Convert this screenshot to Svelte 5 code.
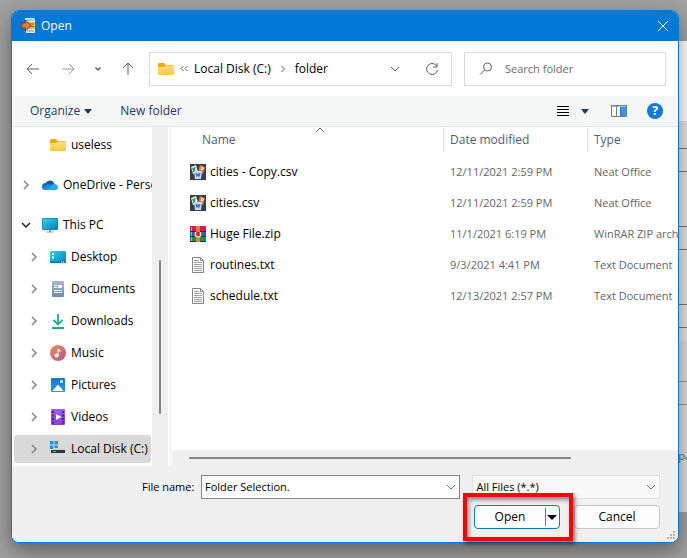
<script lang="ts">
	interface TreeItem {
		label: string;
		icon: string;
		level: number;
		chevron?: 'open' | 'closed';
		gap?: boolean;
	}

	interface FileItem {
		name: string;
		icon: string;
		modified: string;
		type: string;
	}

	const tree: TreeItem[] = [
		{ label: 'useless', icon: 'folder', level: 1 },
		{ label: 'OneDrive - Personal', icon: 'onedrive', level: 0, chevron: 'closed', gap: true },
		{ label: 'This PC', icon: 'pc', level: 0, chevron: 'open', gap: true },
		{ label: 'Desktop', icon: 'desktop', level: 1, chevron: 'closed' },
		{ label: 'Documents', icon: 'documents', level: 1, chevron: 'closed' },
		{ label: 'Downloads', icon: 'downloads', level: 1, chevron: 'closed' },
		{ label: 'Music', icon: 'music', level: 1, chevron: 'closed' },
		{ label: 'Pictures', icon: 'pictures', level: 1, chevron: 'closed' },
		{ label: 'Videos', icon: 'videos', level: 1, chevron: 'closed' },
		{ label: 'Local Disk (C:)', icon: 'disk', level: 1, chevron: 'closed' }
	];

	const files: FileItem[] = [
		{ name: 'cities - Copy.csv', icon: 'csv', modified: '12/11/2021 2:59 PM', type: 'Neat Office' },
		{ name: 'cities.csv', icon: 'csv', modified: '12/11/2021 2:59 PM', type: 'Neat Office' },
		{ name: 'Huge File.zip', icon: 'zip', modified: '11/1/2021 6:19 PM', type: 'WinRAR ZIP archive' },
		{ name: 'routines.txt', icon: 'txt', modified: '9/3/2021 4:41 PM', type: 'Text Document' },
		{ name: 'schedule.txt', icon: 'txt', modified: '12/13/2021 2:57 PM', type: 'Text Document' }
	];

	let selected = $state('Local Disk (C:)');
	let search = $state('');
	let fileName = $state('Folder Selection.');
</script>

{#snippet icon(name: string)}
	<svg class="icon" width="16" height="16" viewBox="0 0 16 16" aria-hidden="true">
		{#if name === 'folder'}
			<path d="M0 3Q0 2 1 2h5l2 2h7q1 0 1 1v3H0z" fill="#f2aa12" />
			<path d="M0 6h6l2-1.500h7q1 0 1 1V13q0 1-1 1H1q-1 0-1-1z" fill="url(#folder-fill)" />
		{:else if name === 'onedrive'}
			<path d="M3 7a5 5 0 0 1 9-1l2 4H3z" fill="#0c59a4" />
			<circle cx="3.500" cy="9.500" r="3.500" fill="#1070bc" />
			<path d="M6 7q3 0 5 3l-6 3H3Q1 13 .5 11z" fill="#168bd7" />
			<path d="M9 8.500q1-1.500 3-1.500 4 0 4 3.500 0 2.500-3 2.500H3l5-3z" fill="#28a8ea" />
		{:else if name === 'pc'}
			<path d="M7 12h2v3H7zM4.500 14.500h7v1h-7z" fill="#8d969c" />
			<rect y="1" width="16" height="12" rx="1" fill="#167da7" />
			<rect x=".7" y="1.700" width="14.600" height="10.600" fill="url(#screen-fill)" />
		{:else if name === 'desktop'}
			<rect y="2" width="16" height="12" rx="1" fill="url(#screen-fill)" />
			<path d="M0 12.500h16V13q0 1-1 1H1q-1 0-1-1z" fill="#1675a8" />
			<path d="M2 4h2v2H2zM2 7.500h2v2H2zM11 12.500h1v1h-1zM13 12.500h1v1h-1z" fill="#fff" />
		{:else if name === 'documents'}
			<rect x="2" y="0" width="12" height="16" rx="1" fill="url(#document-fill)" />
			<path d="M4 4.500h3M4 6.500h3M4 9.500h8M4 11.500h8" stroke="#fff" />
			<path d="M8 4h4v3H8z" fill="#fff" />
		{:else if name === 'downloads'}
			<path d="M8 1v10M3.500 7 8 11.500 12.500 7M2 15h12" fill="none" stroke="#18ae8d" stroke-width="1.800" />
		{:else if name === 'music'}
			<circle cx="8" cy="8" r="8" fill="url(#music-fill)" />
			<circle cx="6.500" cy="10.500" r="2" fill="#fff" />
			<path d="M7.500 11V3.500l3 1.500v2l-2-1V11" fill="#fff" />
		{:else if name === 'pictures'}
			<rect x="1" y="1" width="14" height="14" rx="1" fill="url(#picture-fill)" />
			<path d="M2.500 14 7.500 8q.5-.5 1 0l5 6z" fill="#fff" />
			<circle cx="11.500" cy="4.500" r="1.500" fill="#e9f6ff" />
		{:else if name === 'videos'}
			<rect x="1" y="0" width="14" height="16" rx="1" fill="url(#video-fill)" />
			<path
				d="M2 2h2v2H2zM2 5.500h2v2H2zM2 9h2v2H2zM2 12.500h2v2H2zM12 2h2v2h-2zM12 5.500h2v2h-2zM12 9h2v2h-2zM12 12.500h2v2h-2z"
				fill="#55248e"
			/>
			<path d="M6 5l5.500 3L6 11z" fill="#fff" />
		{:else if name === 'disk'}
			<path d="M0 0h3.500v3.500H0zM4.500 0H8v3.500H4.500zM0 4.500h3.500V8H0zM4.500 4.500H8V8H4.500z" fill="#1597e5" />
			<path d="M4 7h9l2 2H2z" fill="#cfd2d4" />
			<path d="M1 9h14v3H1z" fill="#30363a" />
			<path d="M3 10.500h3" stroke="#42e260" />
		{:else if name === 'csv'}
			<rect width="16" height="16" fill="#343f48" />
			<path d="M1 3l5-2 2 7-5 2z" fill="#e4f7eb" />
			<path d="M2.500 4l3 4M5 3 3.500 8" stroke="#19985a" stroke-width="1.300" />
			<path d="M10 1l5 2-2 7-5-2z" fill="#f27248" />
			<path d="M11 6l1-3 1.500 1-.5 1.500-2-.5" fill="none" stroke="#fff" />
			<path d="M4 7h8l-1 8H5z" fill="#c5daf7" />
			<path d="M6 9l1 3 1-2 1 2 1-3" fill="none" stroke="#316ec1" stroke-width="1.200" />
		{:else if name === 'zip'}
			<rect width="16" height="6" fill="#c72358" />
			<rect y="5" width="16" height="6" fill="#3c56b5" />
			<rect y="10" width="16" height="6" fill="#159253" />
			<path d="M0 5.500h16M0 10.500h16M0 15.500h16" stroke="#173347" />
			<path d="M1.500 1v4M1.500 6v4M1.500 11v4" stroke="#e8a13d" />
			<rect x="6" width="4" height="16" fill="#ed7c24" />
			<path d="M5.500 6v4q2.500 1.500 5 0V6" fill="#ac3620" stroke="#ffe8b5" stroke-width="1.400" />
		{:else}
			<path d="M2.500.5h8l3 3v12h-11z" fill="#fff" stroke="#858585" />
			<path d="M10.500.5v3h3" fill="none" stroke="#858585" />
			<path d="M4 3.500h5M4 5.500h8M4 7.500h8M4 9.500h8M4 11.500h8M4 13.500h8" stroke="#a0a0a0" />
		{/if}
	</svg>
{/snippet}

{#snippet chevron(dir: 'down' | 'right')}
	<svg class="chevron" width="10" height="10" viewBox="0 0 10 10" aria-hidden="true">
		<path d={dir === 'down' ? 'M1 3l4 4 4-4' : 'M3 1l4 4-4 4'} />
	</svg>
{/snippet}

<svg class="defs" width="0" height="0" aria-hidden="true">
	<defs>
		<linearGradient id="folder-fill" x2="0" y2="1">
			<stop stop-color="#ffdf80" /><stop offset="1" stop-color="#ffc83d" />
		</linearGradient>
		<linearGradient id="screen-fill" x2="1" y2="1">
			<stop stop-color="#32d5ed" /><stop offset="1" stop-color="#087bbd" />
		</linearGradient>
		<linearGradient id="document-fill" x2="0" y2="1">
			<stop stop-color="#a5b9cf" /><stop offset="1" stop-color="#6b88ac" />
		</linearGradient>
		<linearGradient id="music-fill" x2="1" y2="1">
			<stop stop-color="#ef9159" /><stop offset="1" stop-color="#b65487" />
		</linearGradient>
		<linearGradient id="picture-fill" x2="0" y2="1">
			<stop stop-color="#1479c9" /><stop offset="1" stop-color="#23a0ed" />
		</linearGradient>
		<linearGradient id="video-fill" x2="0" y2="1">
			<stop stop-color="#a45df0" /><stop offset="1" stop-color="#8642d5" />
		</linearGradient>
	</defs>
</svg>

<div class="desktop">
	<div class="behind" aria-hidden="true"><span>pa</span></div>

	<main class="dialog">
		<header class="titlebar">
			<svg width="16" height="16" viewBox="0 0 16 16" aria-hidden="true">
				<path d="M5 0h9l1 2v4H5zM5 10h10v5H6z" fill="#d8e9fa" />
				<path d="M7 2h6M7 13h7" stroke="#6b9dd0" />
				<path d="M7 4h8v7H7z" fill="#f2bb35" />
				<path d="M9 6h5M9 8.500h5" stroke="#9b6816" />
				<path d="M.5 5h5V2L11 7.500 5.500 13v-3h-5l2-2.500z" fill="#e97832" stroke="#803a25" />
			</svg>
			<h1>Open</h1>
			<button type="button" class="close" aria-label="Close">
				<svg width="12" height="12" viewBox="0 0 12 12"><path d="M1 1l10 10M11 1 1 11" /></svg>
			</button>
		</header>

		<nav class="navbar">
			<div class="history">
				<button type="button" aria-label="Back">
					<svg width="14" height="14" viewBox="0 0 14 14"><path d="M13 7H1M6 2 1 7l5 5" /></svg>
				</button>
				<button type="button" class="faded" aria-label="Forward">
					<svg width="14" height="14" viewBox="0 0 14 14"><path d="M1 7h12M8 2l5 5-5 5" /></svg>
				</button>
				<button type="button" class="recent" aria-label="Recent locations">
					<svg width="14" height="14" viewBox="0 0 14 14"><path d="M4.500 5.500 7 8l2.500-2.500" /></svg>
				</button>
				<button type="button" aria-label="Up">
					<svg width="14" height="14" viewBox="0 0 14 14"><path d="M7 13V1M2 6l5-5 5 5" /></svg>
				</button>
			</div>
			<div class="address">
				{@render icon('folder')}
				<svg class="overflow" width="8" height="8" viewBox="0 0 8 8" aria-hidden="true">
					<path d="M3.500 1 1 3.500 3.500 6M7.500 1 5 3.500 7.500 6" />
				</svg>
				<a href="#disk">Local Disk (C:)</a>
				<svg class="crumb" width="8" height="8" viewBox="0 0 8 8" aria-hidden="true">
					<path d="M2.500 1l3 3-3 3" />
				</svg>
				<a href="#folder">folder</a>
				<button type="button" class="previous" aria-label="Previous locations">{@render chevron('down')}</button>
				<button type="button" aria-label="Refresh">
					<svg width="14" height="14" viewBox="0 0 14 14">
						<path d="M12 4.500A5.500 5.500 0 1 0 12.500 8M12 1v4H8" />
					</svg>
				</button>
			</div>
			<label class="search">
				<svg width="14" height="14" viewBox="0 0 14 14" aria-hidden="true">
					<circle cx="8.500" cy="5" r="4" /><path d="M5.500 8 1 12.500" />
				</svg>
				<input type="text" placeholder="Search folder" aria-label="Search folder" bind:value={search} />
			</label>
		</nav>

		<div class="toolbar">
			<button type="button">
				Organize
				<svg width="8" height="5" viewBox="0 0 8 5" aria-hidden="true"><path d="M0 0h8L4 5z" /></svg>
			</button>
			<button type="button">New folder</button>
			<div class="views">
				<button type="button" aria-label="Change your view">
					<svg width="12" height="12" viewBox="0 0 12 12">
						<path d="M0 1.500h12M0 4.500h12M0 7.500h12M0 10.500h12" stroke="#000" />
					</svg>
				</button>
				<button type="button" aria-label="More options">
					<svg width="8" height="5" viewBox="0 0 8 5"><path d="M0 0h8L4 5z" /></svg>
				</button>
				<button type="button" class="preview" aria-label="Show the preview pane">
					<svg width="16" height="12" viewBox="0 0 16 12">
						<path d="M.5.5h15v11H.5z" fill="#fff" stroke="#737b84" />
						<path d="M0 1h16M5.500 1v11" stroke="#737b84" />
						<path d="M9 2h6v9H9z" fill="#3997e6" />
						<path d="M9.500 2v9" stroke="#1f7bd0" />
					</svg>
				</button>
				<button type="button" class="help" aria-label="Get help">?</button>
			</div>
		</div>

		<div class="content">
			<ul class="tree">
				{#each tree as item}
					<li
						class="tree__item"
						class:tree__item--nested={item.level === 1}
						class:tree__item--gap={item.gap}
						class:tree__item--selected={selected === item.label}
					>
						<button
							type="button"
							class="tree__toggle"
							class:tree__toggle--open={item.chevron === 'open'}
							class:tree__toggle--none={!item.chevron}
							aria-label="Expand {item.label}"
						>
							{@render chevron(item.chevron === 'open' ? 'down' : 'right')}
						</button>
						<button type="button" class="tree__label" onclick={() => (selected = item.label)}>
							{@render icon(item.icon)}
							{item.label}
						</button>
					</li>
				{/each}
			</ul>
			<div class="vscroll"><div class="vscroll__thumb"></div></div>
			<section class="files">
				<svg class="sort" width="8" height="5" viewBox="0 0 8 5" aria-hidden="true"><path d="M.5 4.500 4 1l3.500 3.500" /></svg>
				<table>
					<thead>
						<tr>
							<th class="name">Name</th>
							<th class="modified">Date modified</th>
							<th class="type">Type</th>
						</tr>
					</thead>
					<tbody>
						{#each files as file}
							<tr>
								<td><div class="file">{@render icon(file.icon)}{file.name}</div></td>
								<td>{file.modified}</td>
								<td>{file.type}</td>
							</tr>
						{/each}
					</tbody>
				</table>
				<div class="hscroll"><div class="hscroll__thumb"></div></div>
			</section>
		</div>

		<footer class="footer">
			<div class="fields">
				<label for="file-name">File name:</label>
				<div class="combo">
					<input id="file-name" type="text" bind:value={fileName} />
					<button type="button" aria-label="Recent names">{@render chevron('down')}</button>
				</div>
				<div class="filter">
					<select aria-label="File type">
						<option>All Files (*.*)</option>
					</select>
					{@render chevron('down')}
				</div>
			</div>
			<div class="actions">
				<div class="split">
					<button type="button" class="split__main">Open</button>
					<button type="button" class="split__more" aria-label="Open options">
						<svg width="10" height="5" viewBox="0 0 10 5"><path d="M0 0h10L5 5z" /></svg>
					</button>
					<span class="highlight" aria-hidden="true"></span>
				</div>
				<button type="button" class="cancel">Cancel</button>
			</div>
			<svg class="grip" width="8" height="8" viewBox="0 0 8 8" aria-hidden="true">
				<path d="M6 0h2v2H6zM3 3h2v2H3zM6 3h2v2H6zM0 6h2v2H0zM3 6h2v2H3zM6 6h2v2H6z" fill="#b4b4b4" />
			</svg>
		</footer>
	</main>
</div>

<style>
	:global(body) {
		margin: 0;
		background: #a0a0a0;
	}

	.desktop {
		position: relative;
		overflow: hidden;
		padding: 10px 8px 15px 11px;
		font-family: 'Open Sans', 'Noto Sans', sans-serif;
		font-size: 11px;
		line-height: 16px;
		color: #000;
	}

	.desktop *,
	.desktop *::before {
		box-sizing: border-box;
	}

	.defs {
		position: absolute;
	}

	button,
	input,
	select {
		margin: 0;
		padding: 0;
		border: none;
		background: none;
		font: inherit;
		color: inherit;
	}

	input,
	select {
		outline: none;
	}

	a {
		color: inherit;
		text-decoration: none;
	}

	svg {
		display: block;
		flex: none;
	}

	.chevron {
		fill: none;
		stroke: #707070;
	}

	/* page showing past the right edge of the dialog */
	.behind {
		position: absolute;
		top: 41px;
		right: 0;
		bottom: 46px;
		width: 60px;
		overflow: hidden;
		background:
			linear-gradient(#777, #777) 0 107px / 100% 1px no-repeat,
			linear-gradient(#777, #777) 0 130px / 100% 1px no-repeat,
			linear-gradient(#777, #777) 0 185px / 100% 1px no-repeat,
			linear-gradient(#777, #777) 0 208px / 100% 1px no-repeat,
			linear-gradient(#777, #777) 0 263px / 100% 1px no-repeat,
			linear-gradient(#777, #777) 0 286px / 100% 1px no-repeat,
			linear-gradient(#999, #999) 0 340px / 100% 1px no-repeat,
			linear-gradient(#999, #999) 0 363px / 100% 1px no-repeat,
			linear-gradient(#fff 0 80px, #e4e4e4 80px 300px, #dcdcdc 300px);
		color: #666;
	}

	.behind span {
		position: absolute;
		right: -4px;
		bottom: 48px;
	}

	.dialog {
		position: relative;
		border: 1px solid #0078d7;
		border-radius: 8px;
		background: #fff;
		box-shadow: 0 8px 20px rgba(0, 0, 0, 0.4);
	}

	.titlebar {
		display: flex;
		align-items: center;
		gap: 5px;
		height: 30px;
		padding: 0 9px 0 8px;
		border-radius: 7px 7px 0 0;
		background: #0078d7;
		color: #fff;
	}

	.titlebar h1 {
		flex: 1;
		margin: 0;
		font-size: 12px;
		font-weight: 400;
	}

	.close svg {
		fill: none;
		stroke: #fff;
	}

	.navbar {
		display: flex;
		align-items: center;
		gap: 12px;
		height: 55px;
		padding: 0 12px 0 14px;
	}

	.history {
		display: flex;
		gap: 21px;
		width: 111px;
	}

	.navbar svg:not(.icon) {
		fill: none;
		stroke: #606060;
	}

	.history .faded {
		opacity: 0.6;
	}

	.history .recent {
		margin: 0 -5px;
	}

	.history .recent svg {
		stroke-width: 1.5;
	}

	.address,
	.search {
		display: flex;
		align-items: center;
		height: 34px;
		border: 1px solid #d9d9d9;
		background: #fff;
	}

	.address {
		flex: 3 1 60px;
		gap: 6px;
		padding: 0 12px 0 8px;
		font-size: 12px;
		white-space: nowrap;
	}

	.address .crumb {
		margin: 0 2px;
	}

	.address .previous {
		margin: 0 19px 0 auto;
	}

	.search {
		flex: 2 1 40px;
		gap: 12px;
		padding: 0 14px;
	}

	.search input {
		width: 100%;
		min-width: 0;
	}

	.search input::placeholder {
		color: #6d6d6d;
		opacity: 1;
	}

	.toolbar {
		display: flex;
		align-items: center;
		gap: 28px;
		height: 31px;
		padding: 0 15px 0 18px;
		border-bottom: 1px solid #e4e6e6;
		background: #f5f7f7;
		color: #1e395b;
		font-size: 12px;
	}

	.toolbar button {
		display: flex;
		align-items: center;
		gap: 4px;
	}

	.toolbar svg {
		fill: #1e395b;
	}

	.views {
		display: flex;
		align-items: center;
		gap: 12px;
		margin-left: auto;
	}

	.toolbar .preview {
		margin: 0 8px 0 10px;
	}

	.toolbar .help {
		justify-content: center;
		width: 16px;
		height: 16px;
		border-radius: 50%;
		background: #0f7ad8;
		color: #fff;
		font-weight: 700;
	}

	.content {
		display: flex;
		height: 339px;
	}

	.tree {
		width: 140px;
		margin: 0;
		padding: 0 1px 0 2px;
		overflow: hidden;
		font-size: 12px;
		list-style: none;
	}

	.tree__item {
		display: flex;
		align-items: center;
		height: 28px;
		margin: 4px 0;
		padding-left: 7px;
		border-radius: 3px;
		white-space: nowrap;
	}

	.tree__item--nested {
		padding-left: 15px;
	}

	.tree__item--gap {
		margin-top: 12px;
	}

	.tree__item--selected {
		background: #d9d9d9;
	}

	.tree__toggle {
		margin-right: 11px;
	}

	.tree__toggle .chevron {
		stroke: #858585;
		stroke-width: 1.5;
	}

	.tree__toggle--open .chevron {
		stroke: #222;
	}

	.tree__toggle--none {
		visibility: hidden;
	}

	.tree__label {
		display: flex;
		align-items: center;
		gap: 5px;
	}

	.vscroll {
		width: 16px;
		padding: 133px 7px 52px;
		background: #f0f0f0;
	}

	.vscroll__thumb {
		width: 2px;
		height: 100%;
		border-radius: 1px;
		background: #858585;
	}

	.files {
		position: relative;
		display: flex;
		flex: 1;
		flex-direction: column;
		justify-content: space-between;
		min-width: 0;
		margin-left: 2px;
		padding-left: 1px;
		border-left: 1px solid #f0f0f0;
		overflow: hidden;
	}

	.sort {
		position: absolute;
		top: 0;
		left: 145px;
		fill: none;
		stroke: #606060;
	}

	table {
		width: 100%;
		table-layout: fixed;
		border-spacing: 0;
	}

	th,
	td {
		padding: 0 0 0 7px;
		overflow: hidden;
		font-weight: 400;
		text-align: left;
		white-space: nowrap;
	}

	th {
		height: 29px;
		padding-bottom: 3px;
		background: linear-gradient(#e5e5e5, #e5e5e5) 0 0 / 1px 25px no-repeat;
		color: #4c607a;
		font-size: 12px;
	}

	th.name {
		padding-left: 30px;
		background: none;
	}

	th.modified {
		width: 144px;
	}

	th.type {
		width: 91px;
	}

	td {
		height: 31px;
		color: #666;
	}

	td:first-child {
		padding-left: 18px;
		color: #000;
		font-size: 12px;
	}

	.file {
		display: flex;
		align-items: center;
		gap: 4px;
	}

	.hscroll {
		height: 16px;
		padding: 7px 107px 7px 17px;
		background: #f0f0f0;
	}

	.hscroll__thumb {
		height: 2px;
		border-radius: 1px;
		background: #858585;
	}

	.footer {
		position: relative;
		padding: 9px 18px 13px 17px;
		border-radius: 0 0 7px 7px;
		background: #f0f0f0;
	}

	.fields {
		display: flex;
		align-items: center;
		padding-left: 113px;
	}

	.fields > label {
		width: 59px;
	}

	.combo {
		display: flex;
		flex: 260 1 130px;
		height: 24px;
		margin-right: 12px;
		padding: 0 3px;
		border: 1px solid #858585;
		background: #fff;
	}

	.combo input {
		flex: 1;
		min-width: 0;
	}

	.filter {
		display: grid;
		flex: 188 1 94px;
		align-items: center;
		height: 24px;
		border: 1px solid #e2e2e2;
		background: #f9f9f9;
	}

	.filter > :global(*) {
		grid-area: 1 / 1;
	}

	.filter select {
		height: 100%;
		padding: 0 20px 0 3px;
		appearance: none;
	}

	.filter .chevron {
		justify-self: end;
		margin-right: 3px;
		pointer-events: none;
	}

	.actions {
		display: flex;
		justify-content: flex-end;
		gap: 14px;
		margin-top: 6px;
		font-size: 12px;
	}

	.split,
	.cancel {
		width: 86px;
		height: 24px;
		border: 1px solid #c8c8c8;
		border-radius: 4px;
		background: #fdfdfd;
	}

	.split {
		position: relative;
		display: flex;
		align-items: center;
		border-color: #0078d7;
	}

	.split__main {
		flex: 1;
	}

	.split__more {
		height: 18px;
		padding: 0 2px 0 1px;
		border-left: 1px solid #707070;
	}

	.highlight {
		position: absolute;
		inset: -13px -14px -13px -12px;
		border: 4px solid #fe0000;
		box-shadow:
			2px 3px 4px rgba(0, 0, 0, 0.5),
			inset 2px 3px 4px rgba(0, 0, 0, 0.4);
		pointer-events: none;
	}

	.grip {
		position: absolute;
		right: 3px;
		bottom: 3px;
	}
</style>
